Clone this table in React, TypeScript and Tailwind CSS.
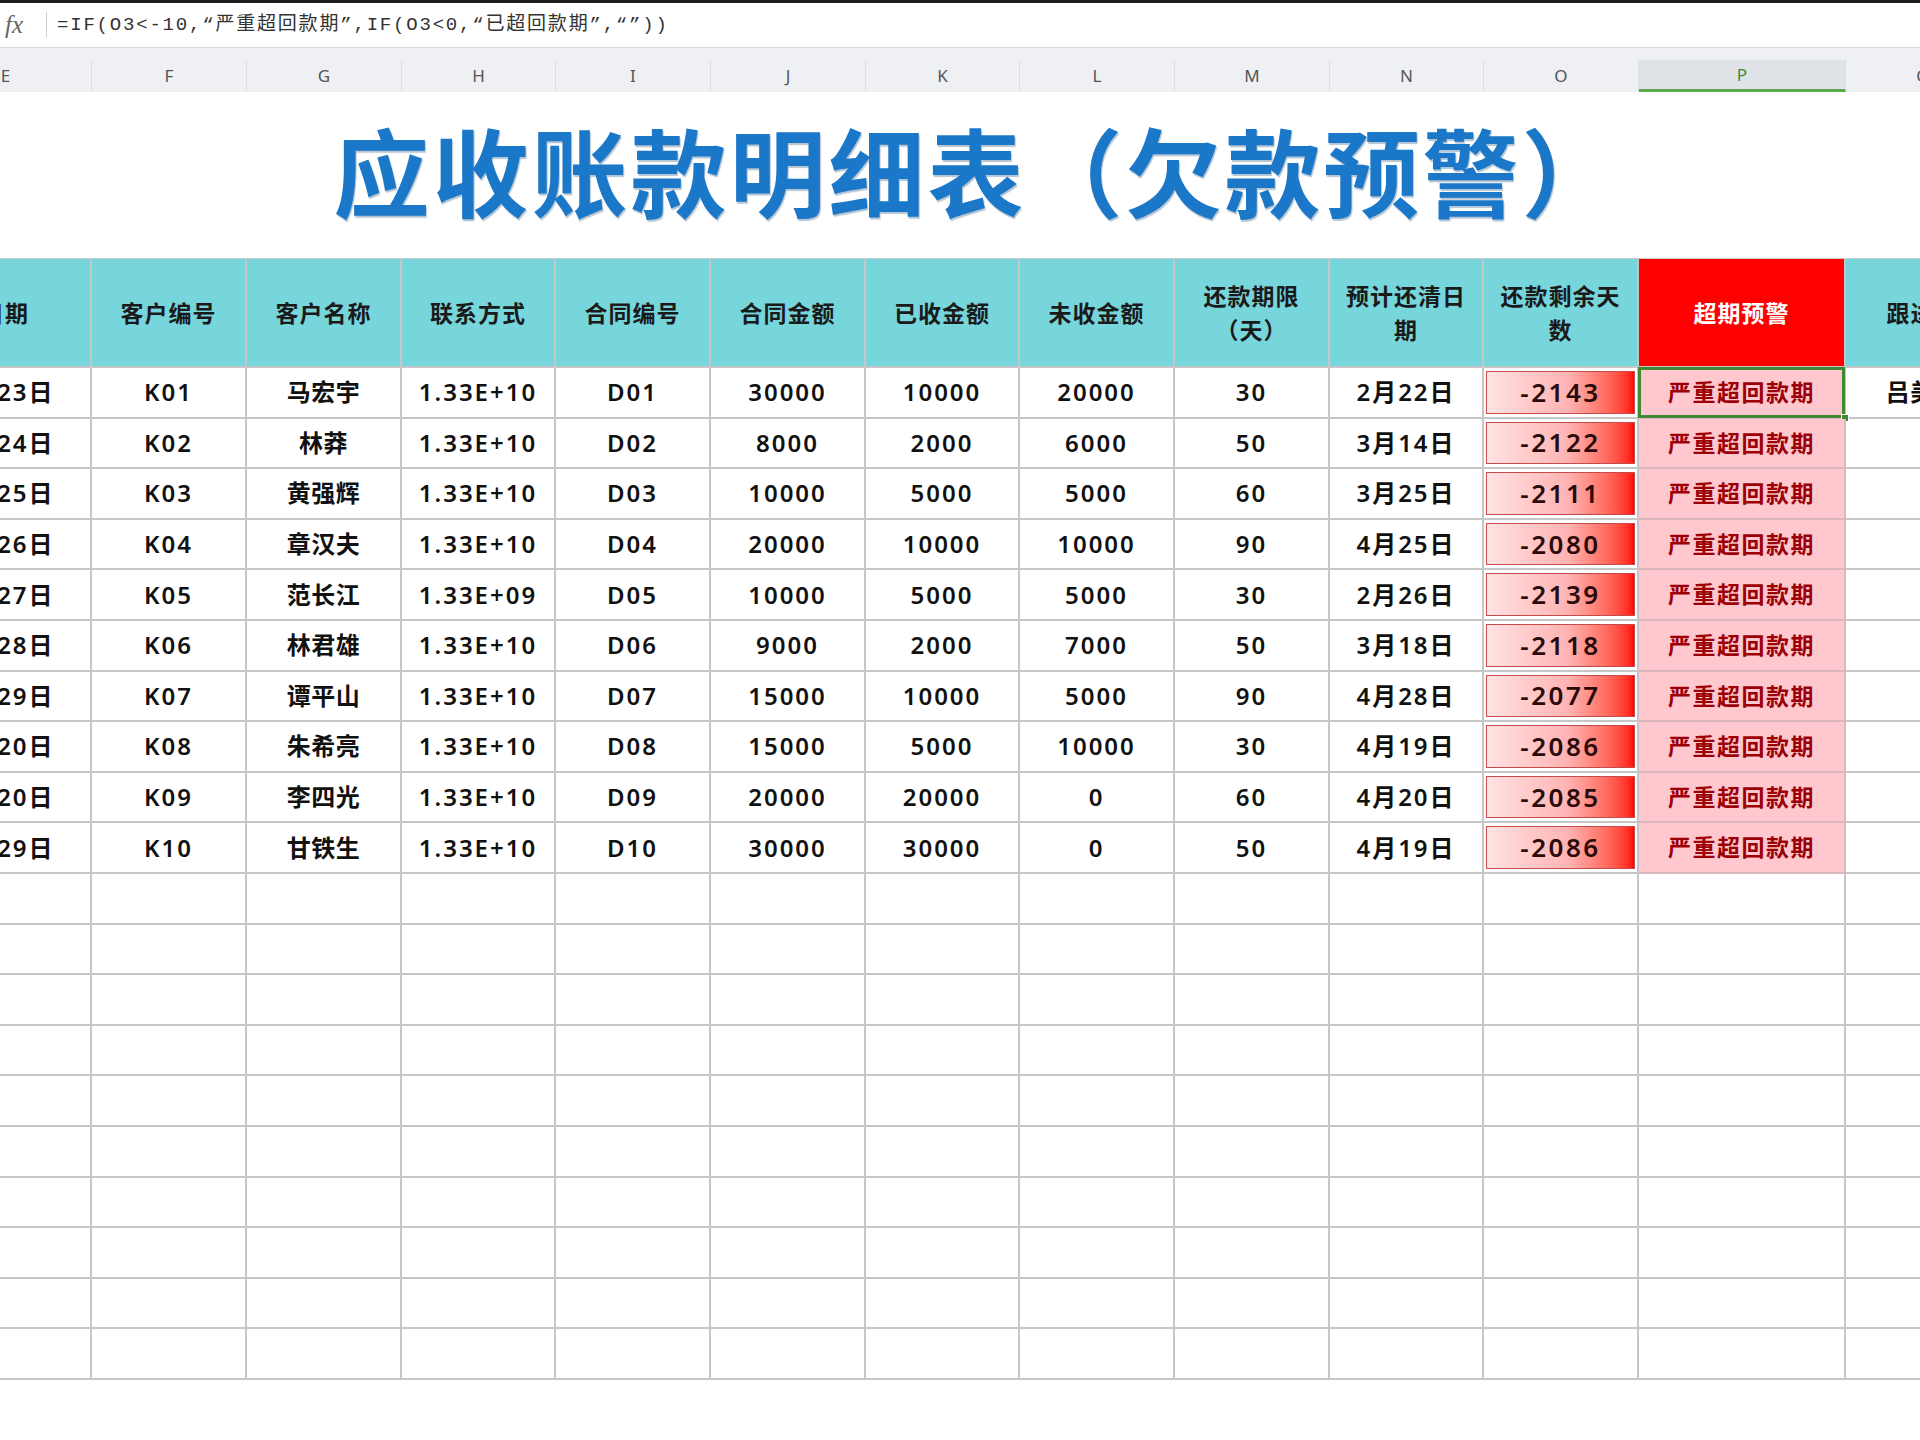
import React from "react";

const letters = ["E", "F", "G", "H", "I", "J", "K", "L", "M", "N", "O", "P", "Q"];

const headers: React.ReactNode[] = [
  "日期",
  "客户编号",
  "客户名称",
  "联系方式",
  "合同编号",
  "合同金额",
  "已收金额",
  "未收金额",
  <>还款期限<br />（天）</>,
  <>预计还清日<br />期</>,
  <>还款剩余天<br />数</>,
  "超期预警",
  "跟进人",
];

const rows = [
  ["1月23日", "K01", "马宏宇", "1.33E+10", "D01", "30000", "10000", "20000", "30", "2月22日", "-2143", "严重超回款期", "吕美玲"],
  ["1月24日", "K02", "林莽", "1.33E+10", "D02", "8000", "2000", "6000", "50", "3月14日", "-2122", "严重超回款期", ""],
  ["1月25日", "K03", "黄强辉", "1.33E+10", "D03", "10000", "5000", "5000", "60", "3月25日", "-2111", "严重超回款期", ""],
  ["1月26日", "K04", "章汉夫", "1.33E+10", "D04", "20000", "10000", "10000", "90", "4月25日", "-2080", "严重超回款期", ""],
  ["1月27日", "K05", "范长江", "1.33E+09", "D05", "10000", "5000", "5000", "30", "2月26日", "-2139", "严重超回款期", ""],
  ["1月28日", "K06", "林君雄", "1.33E+10", "D06", "9000", "2000", "7000", "50", "3月18日", "-2118", "严重超回款期", ""],
  ["1月29日", "K07", "谭平山", "1.33E+10", "D07", "15000", "10000", "5000", "90", "4月28日", "-2077", "严重超回款期", ""],
  ["3月20日", "K08", "朱希亮", "1.33E+10", "D08", "15000", "5000", "10000", "30", "4月19日", "-2086", "严重超回款期", ""],
  ["2月20日", "K09", "李四光", "1.33E+10", "D09", "20000", "20000", "0", "60", "4月20日", "-2085", "严重超回款期", ""],
  ["2月29日", "K10", "甘铁生", "1.33E+10", "D10", "30000", "30000", "0", "50", "4月19日", "-2086", "严重超回款期", ""],
];

// column widths (E is only partly on screen)
const grid = "grid grid-cols-[172px_155px_155px_154px_155px_155px_154px_155px_155px_154px_155px_207px_155px]";

export default function App() {
  return (
    <div className="w-[1920px] h-[1440px] overflow-hidden bg-white font-['Noto_Sans','Noto_Sans_CJK_SC',sans-serif] text-[#111]">
      <div className="h-[3px] bg-[#1f1f1f]" />

      {/* Formula bar */}
      <div className="h-[45px] flex items-center border-b border-[#d6d8dc]">
        <span className="w-[46px] pl-[5px] text-[25px] italic text-[#666] font-['Liberation_Serif',serif]">fx</span>
        <span className="h-[26px] w-px bg-[#d0d0d0]" />
        <span className="pl-[10px] text-[19px] tracking-[1.8px] text-[#333] font-['Liberation_Mono','Noto_Sans_CJK_SC',monospace]">
          =IF(O3&lt;-10,“严重超回款期”,IF(O3&lt;0,“已超回款期”,“”))
        </span>
      </div>

      {/* Column letters */}
      <div className="h-[44px] bg-[#eef0f3] pt-[12px] overflow-hidden">
        <div className={`${grid} ml-[-80px] h-[32px]`}>
          {letters.map((l) => (
            <div
              key={l}
              className={`flex items-center justify-center text-[17px] border-r border-[#dcdee2] ${
                l === "P" ? "bg-[#dfe3e8] text-[#3f8a3a] border-b-[3px] border-b-[#5aa84c]" : "text-[#555]"
              }`}
            >
              {l}
            </div>
          ))}
        </div>
      </div>

      {/* Title */}
      <div className="h-[166px] flex items-center justify-center pl-[34px] pb-[12px]">
        <h1 className="text-[96px] leading-none font-bold tracking-[3px] text-[#1b78c8] font-['Noto_Sans_CJK_SC',sans-serif] [text-shadow:1px_2px_1px_rgba(10,60,110,0.3)]">
          应收账款明细表（欠款预警）
        </h1>
      </div>

      {/* Table */}
      <div className="ml-[-80px]">
        <div className={`${grid} h-[110px] border-t border-[#c9c9c9]`}>
          {headers.map((h, i) => (
            <div
              key={i}
              className={`flex items-center justify-center text-center text-[23px] leading-[34px] font-bold tracking-[1px] border-r-2 border-b-2 border-[#c6c6c6] ${
                i === 11 ? "bg-[#ff0000] text-white" : "bg-[#77d5dc] text-[#1a1a1a]"
              }`}
            >
              <span>{h}</span>
            </div>
          ))}
        </div>

        {rows.map((r, ri) => (
          <div key={ri} className={`${grid} h-[50.6px]`}>
            {r.map((c, ci) => {
              if (ci === 10) {
                return (
                  <div key={ci} className="border-r-2 border-b-2 border-[#c6c6c6] px-[2px] py-[3px]">
                    <div className="h-full flex items-center justify-center border border-[#c94a4a] bg-linear-to-r from-[#ffe3e3] via-[#ffb3b3] via-55% to-[#ff0000] text-[26px] font-semibold tracking-[2.5px] text-[#2a0a0a]">
                      {c}
                    </div>
                  </div>
                );
              }
              if (ci === 11) {
                return (
                  <div
                    key={ci}
                    className="relative flex items-center justify-center bg-[#ffc7ce] text-[#9c0006] text-[23px] font-semibold tracking-[1.5px] border-r-2 border-b-2 border-[#d9b8bc]"
                  >
                    {c}
                    {ri === 0 && (
                      <>
                        <div className="absolute inset-[-1px] border-[3px] border-[#3e8b33]" />
                        <div className="absolute right-[-5px] bottom-[-5px] w-[8px] h-[8px] bg-[#3e8b33] border border-white" />
                      </>
                    )}
                  </div>
                );
              }
              const name = ci === 2 || ci === 12;
              return (
                <div
                  key={ci}
                  className={`flex items-center justify-center text-[24px] font-semibold border-r-2 border-b-2 border-[#c6c6c6] whitespace-nowrap ${
                    name ? "tracking-[0.5px]" : "tracking-[2px]"
                  }`}
                >
                  {c}
                </div>
              );
            })}
          </div>
        ))}

        {Array.from({ length: 10 }).map((_, ri) => (
          <div key={ri} className={`${grid} h-[50.6px]`}>
            {letters.map((l) => (
              <div key={l} className="border-r-2 border-b-2 border-[#c6c6c6]" />
            ))}
          </div>
        ))}
      </div>
    </div>
  );
}
